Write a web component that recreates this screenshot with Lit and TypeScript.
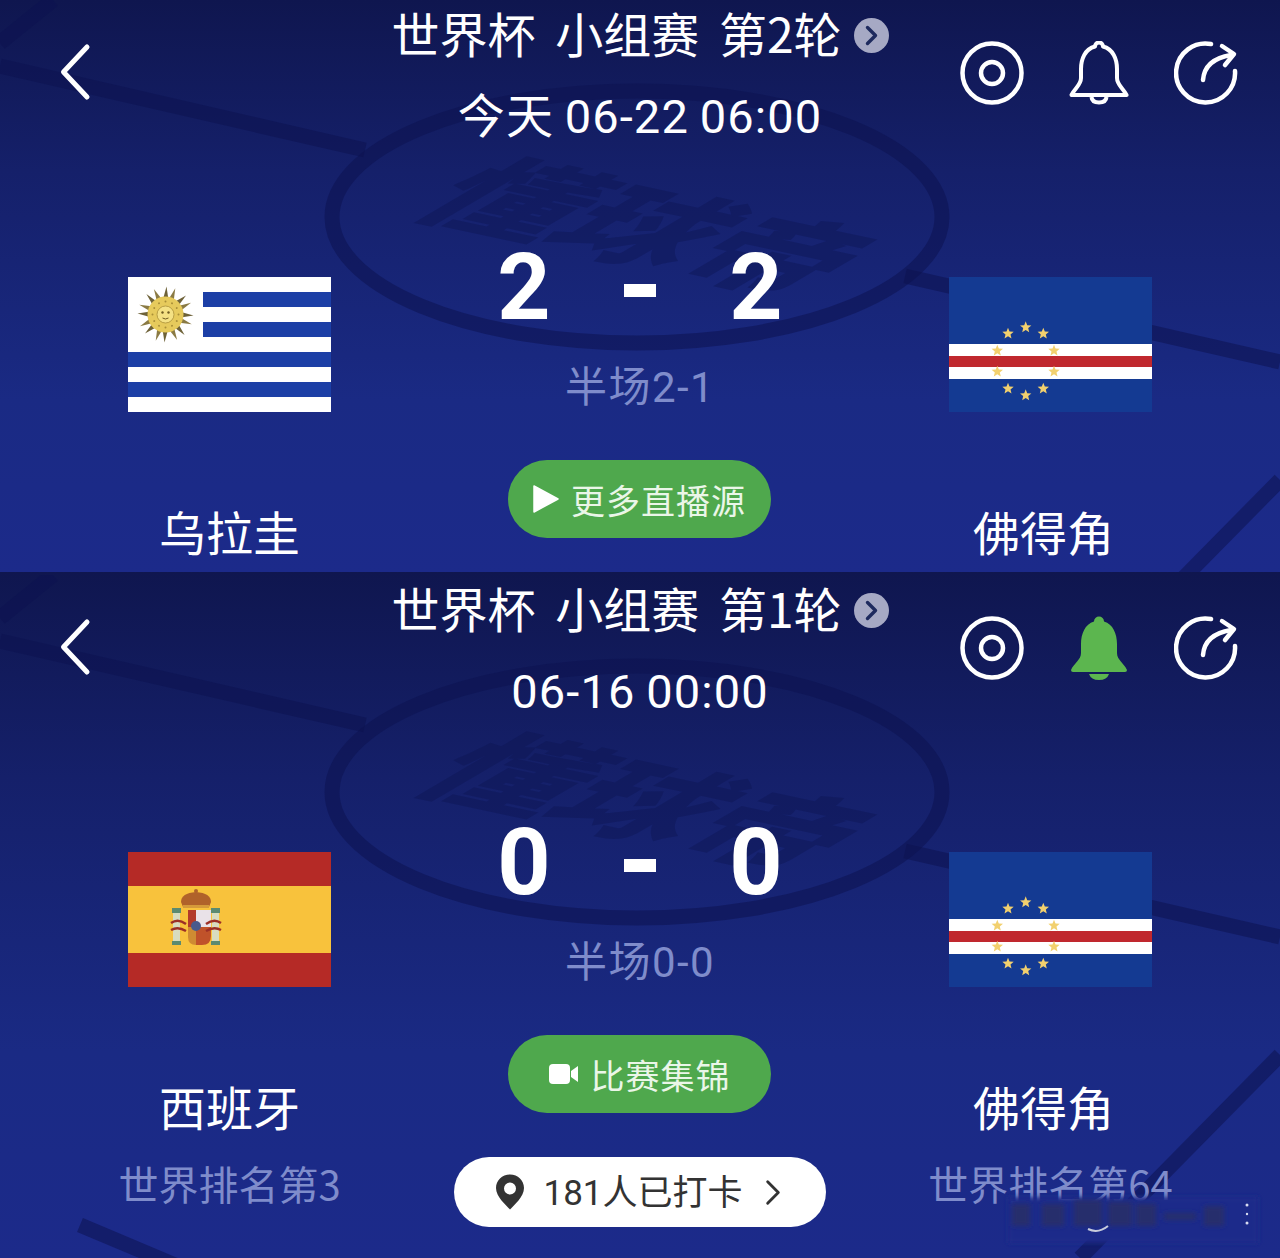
import { LitElement, html, css, svg } from "lit";
import { customElement, property } from "lit/decorators.js";

const star = (x: number, y: number) => {
  const pts: string[] = [];
  for (let i = 0; i < 10; i++) {
    const r = i % 2 ? 2.6 : 6;
    const a = -Math.PI / 2 + (i * Math.PI) / 5;
    pts.push(`${(x + r * Math.cos(a)).toFixed(1)},${(y + r * Math.sin(a)).toFixed(1)}`);
  }
  return svg`<polygon points=${pts.join(" ")} fill="#f2d06e"/>`;
};

const flagUruguay = html`<svg class="flag" viewBox="0 0 203 135">
  <rect width="203" height="135" fill="#fff"/>
  <g fill="#1c3fa6">
    <rect x="75" y="15" width="128" height="15"/>
    <rect x="75" y="45" width="128" height="15"/>
    <rect y="75" width="203" height="15"/>
    <rect y="105" width="203" height="15"/>
  </g>
  <g transform="translate(37.5 37.5)">
    ${Array.from({ length: 16 }, (_, i) => svg`<path d="M-3.4 -12 L${i % 2 ? -1 : 1} -28 L3.4 -12Z" fill=${i % 2 ? "#8a7a44" : "#6e6238"} transform="rotate(${i * 22.5})"/>`)}
    <circle r="18" fill="#e6ca5c"/>
    <circle r="8.5" fill="#f4e184" stroke="#a98f38" stroke-width=".8"/>
    <circle cx="-3" cy="-2" r="1.2" fill="#6e5a20"/>
    <circle cx="3" cy="-2" r="1.2" fill="#6e5a20"/>
    <path d="M-3 3.5 Q0 5.5 3 3.5" stroke="#6e5a20" fill="none" stroke-width="1"/>
    ${Array.from({ length: 12 }, (_, i) => svg`<circle cx="0" cy="-13" r="1" fill="#a98f38" transform="rotate(${i * 30})"/>`)}
  </g>
</svg>`;

const capeStars: [number, number][] = [
  [76.7, 50.3], [59, 56.7], [94.3, 56.7], [48.3, 73.7], [105, 73.7],
  [48.3, 94.7], [105, 94.7], [59, 111.7], [94.3, 111.7], [76.7, 118.3],
];
const flagCapeVerde = html`<svg class="flag" viewBox="0 0 203 135">
  <rect width="203" height="135" fill="#143a92"/>
  <rect y="67" width="203" height="35" fill="#fff"/>
  <rect y="79" width="203" height="11" fill="#c0282e"/>
  ${capeStars.map(([x, y]) => star(x, y))}
</svg>`;

const flagSpain = html`<svg class="flag" viewBox="0 0 203 135">
  <rect width="203" height="135" fill="#b52a26"/>
  <rect y="34" width="203" height="67" fill="#f8c23c"/>
  <g>
    <path d="M53 50 Q53 41 68 40 Q83 41 83 50 L81 55 H55Z" fill="#b0622a"/>
    <rect x="55" y="53" width="26" height="3" fill="#d59a3a"/>
    <circle cx="68" cy="39" r="2" fill="#b0622a"/>
    <rect x="60" y="58" width="16" height="17" fill="#b33a2a"/>
    <rect x="68" y="58" width="15" height="17" fill="#e9e2e8"/>
    <path d="M60 75 H68 V93 Q60 93 60 85Z" fill="#cf8b32"/>
    <path d="M68 75 H83 V84 Q83 93 74 93 H68Z" fill="#c0522a"/>
    <circle cx="68" cy="74" r="5" fill="#4a5a8c"/>
    <rect x="45" y="60" width="7" height="32" fill="#d8dcc0"/>
    <rect x="84" y="60" width="7" height="32" fill="#d8dcc0"/>
    <rect x="44" y="56" width="9" height="5" fill="#5c8a70"/>
    <rect x="83" y="56" width="9" height="5" fill="#5c8a70"/>
    <rect x="44" y="89" width="9" height="4" fill="#5c8a70"/>
    <rect x="83" y="89" width="9" height="4" fill="#5c8a70"/>
    <path d="M43 71 Q50 66 58 72 M43 78 Q50 74 58 79 M93 71 Q86 66 78 72 M93 78 Q86 74 78 79" stroke="#9c2f26" stroke-width="2.4" fill="none"/>
  </g>
</svg>`;

const backIcon = html`<svg class="back" viewBox="0 0 32 60"><path d="M27 4 L3.5 29 L27 54" fill="none" stroke="#fff" stroke-width="5" stroke-linecap="round" stroke-linejoin="round"/></svg>`;
const targetIcon = html`<svg class="icon" viewBox="0 0 64 64"><circle cx="32" cy="32" r="29.5" fill="none" stroke="#fff" stroke-width="4.5"/><circle cx="32" cy="32" r="11" fill="none" stroke="#fff" stroke-width="4.5"/></svg>`;
const bellOutline = html`<svg class="icon" viewBox="0 0 64 64"><path d="M28 5.5 a4 4 0 0 1 8 0 C46 8 50 18 50 28 V37 C50 44 56 47 59.5 54 H4.5 C8 47 14 44 14 37 V28 C14 18 18 8 28 5.5Z" fill="none" stroke="#fff" stroke-width="4" stroke-linejoin="round"/><path d="M24.5 56 Q25 61.5 32 61.5 Q39 61.5 39.5 56" fill="none" stroke="#fff" stroke-width="4"/></svg>`;
const bellFilled = html`<svg class="icon" viewBox="0 0 64 64"><path d="M27 5.5 a5 5 0 0 1 10 0 C46 8 50 18 50 28 V37 C50 44 57 47 60 54 Q60 56 58 56 H6 Q4 56 4 54 C7 47 14 44 14 37 V28 C14 18 18 8 27 5.5Z" fill="#5cb64f"/><path d="M22 58 H42 Q40 64 32 64 Q24 64 22 58Z" fill="#5cb64f"/></svg>`;
const shareIcon = html`<svg class="icon" viewBox="0 0 64 64"><path d="M37 3 A29.5 29.5 0 1 0 61 30" fill="none" stroke="#fff" stroke-width="4.5" stroke-linecap="round"/><path d="M29 39 C30 26 39 17 57 14" fill="none" stroke="#fff" stroke-width="4.5" stroke-linecap="round"/><path d="M48 5 L60 13 L51 24" fill="none" stroke="#fff" stroke-width="4.5" stroke-linecap="round" stroke-linejoin="round"/></svg>`;
const playIcon = html`<svg class="btn-icon" viewBox="0 0 26 30"><path d="M1 2 L25 15 L1 28Z" fill="#fff" stroke="#fff" stroke-width="1.5" stroke-linejoin="round"/></svg>`;
const videoIcon = html`<svg class="btn-icon" viewBox="0 0 30 22"><rect y="1" width="21" height="20" rx="4" fill="#fff"/><path d="M22 8 L29 3 V19 L22 14Z" fill="#fff"/></svg>`;
const pinIcon = html`<svg class="pin" viewBox="0 0 30 36"><path fill-rule="evenodd" d="M15 0.5 C7 0.5 1 6.5 1 14 C1 23 11 31 15 35.5 C19 31 29 23 29 14 C29 6.5 23 0.5 15 0.5Z M15 8.5 a6 6 0 1 1 0 12 a6 6 0 1 1 0 -12Z" fill="#333"/></svg>`;
const pillChevron = html`<svg class="pill-chevron" viewBox="0 0 18 30"><path d="M3 3 L15 15 L3 27" fill="none" stroke="#333" stroke-width="3.2" stroke-linecap="round" stroke-linejoin="round"/></svg>`;

interface Team { name: string; rank?: string; flag: unknown; }

@customElement("match-panel")
class MatchPanel extends LitElement {
  @property({ type: Object }) home!: Team;
  @property({ type: Object }) away!: Team;
  @property() round = "";
  @property() date = "";
  @property() scoreHome = "";
  @property() scoreAway = "";
  @property() half = "";
  @property() button = "";
  @property({ type: Boolean }) subscribed = false;
  @property() checkin = "";
  @property({ type: Boolean }) tall = false;

  static styles = css`
    :host { display: block; position: relative; overflow: hidden; font-family: "Noto Sans CJK SC", Roboto, sans-serif; color: #fff;
      background: linear-gradient(180deg, #0f164f 0%, #15206a 30%, #1a2a84 70%, #1c2a8a 100%); height: 572px; }
    :host([tall]) { height: 686px; padding-top: 3px; box-sizing: border-box; }
    .decor { position: absolute; left: 0; top: 0; width: 1280px; height: 700px; }
    :host([tall]) .decor { top: 3px; }
    .content { position: relative; }
    .head { display: grid; grid-template-columns: 320px 640px 320px; height: 164px; }
    .back-cell { padding: 43px 0 0 60px; }
    .back { display: block; width: 32px; height: 60px; }
    .center-head { text-align: center; }
    .title { display: flex; justify-content: center; align-items: center; height: 70px; font-size: 48px; line-height: 64px; gap: 12px; white-space: pre; word-spacing: 9px; }
    .title span { padding-bottom: 6px; }
    .badge { width: 35px; height: 35px; display: block; flex: none; }
    .date { height: 94px; line-height: 94px; font-family: Roboto, "Noto Sans CJK SC", sans-serif; font-size: 47px; letter-spacing: 1.1px; word-spacing: -2px; white-space: pre; }
    .actions { display: flex; justify-content: flex-end; gap: 43px; padding: 41px 42px 0 0; align-items: flex-start; }
    .icon { display: block; width: 64px; height: 64px; flex: none; }
    .body { display: grid; grid-template-columns: 459px 362px 459px; }
    .team { display: flex; flex-direction: column; align-items: center; padding-top: 113px; }
    .flag { display: block; width: 203px; height: 135px; }
    .name { font-size: 47px; line-height: 60px; margin-top: 89px; }
    .team.away .name { margin-right: 14px; }
    .rank { font-size: 40px; line-height: 50px; margin-top: 22px; color: #7f8ccb; white-space: nowrap; }
    .mid { display: flex; flex-direction: column; align-items: center; padding-top: 74px; }
    .score { display: grid; grid-template-columns: 116px 116px 116px; height: 100px; align-items: center; justify-items: center; font-family: Roboto, sans-serif; font-size: 93px; font-weight: 700; line-height: 100px; }
    .dash { width: 32px; height: 13px; background: #fff; margin-top: 4px; }
    .half { font-size: 42px; line-height: 50px; margin-top: 25px; color: #7f8ccb; font-family: Roboto, "Noto Sans CJK SC", sans-serif; white-space: pre; letter-spacing: 1.4px; }
    .btn { margin: 47px 1px 0 0; width: 263px; height: 78px; border-radius: 39px; background: #4fa84d; display: flex; align-items: center; justify-content: center; gap: 12px; font-size: 34px; color: #eaf6e8; letter-spacing: 1px; box-sizing: border-box; }
    .btn-icon { display: block; width: 26px; height: 30px; flex: none; }
    .btn.video .btn-icon { width: 30px; height: 22px; }
    .pill { margin-top: 44px; width: 372px; height: 70px; border-radius: 35px; background: #fff; color: #333; display: flex; align-items: center; justify-content: center; font-size: 35px; font-family: Roboto, "Noto Sans CJK SC", sans-serif; gap: 18px; white-space: nowrap; }
    .pill span { padding-bottom: 5px; }
    .pin { display: block; width: 30px; height: 36px; flex: none; }
    .pill-chevron { display: block; width: 16px; height: 27px; margin-left: 4px; margin-right: 4px; flex: none; }
    .smudge { position: absolute; left: 1000px; top: 620px; width: 270px; height: 60px; }
  `;

  render() {
    return html`
      <svg class="decor" viewBox="0 0 1280 700" fill="none" stroke="#0d1350" stroke-opacity=".55" stroke-width="15">
        <path d="M0 43 L53 0"/>
        <path d="M0 66 L365 150"/>
        <path d="M905 276 L1280 362"/>
        <path d="M1280 480 L1080 683"/>
        <path d="M80 650 L175 690"/>
        <ellipse cx="637" cy="217" rx="305" ry="126"/>
        <text x="0" y="0" transform="matrix(0.94 0.2 -0.85 0.5 405 212)" font-size="140" font-weight="900" font-family="Noto Sans CJK SC" fill="#0d1350" fill-opacity=".4" stroke="none">懂球帝</text>
      </svg>
      <div class="content">
        <div class="head">
          <div class="back-cell">${backIcon}</div>
          <div class="center-head">
            <div class="title"><span>世界杯 小组赛 ${this.round}</span><svg class="badge" viewBox="0 0 35 35"><circle cx="17.5" cy="17.5" r="17.5" fill="#a6a9c4"/><path d="M13.5 9.5 L21.5 17.5 L13.5 25.5" fill="none" stroke="#1e2a5e" stroke-width="3.4" stroke-linecap="round" stroke-linejoin="round"/></svg></div>
            <div class="date">${this.date}</div>
          </div>
          <div class="actions">${targetIcon}${this.subscribed ? bellFilled : bellOutline}${shareIcon}</div>
        </div>
        <div class="body">
          <div class="team">${this.home.flag}<div class="name">${this.home.name}</div>${this.home.rank ? html`<div class="rank">${this.home.rank}</div>` : ""}</div>
          <div class="mid">
            <div class="score"><span>${this.scoreHome}</span><div class="dash"></div><span>${this.scoreAway}</span></div>
            <div class="half">${this.half}</div>
            <div class="btn ${this.tall ? "video" : ""}">${this.tall ? videoIcon : playIcon}<span>${this.button}</span></div>
            ${this.checkin ? html`<div class="pill">${pinIcon}<span>${this.checkin}</span>${pillChevron}</div>` : ""}
          </div>
          <div class="team away">${this.away.flag}<div class="name">${this.away.name}</div>${this.away.rank ? html`<div class="rank">${this.away.rank}</div>` : ""}</div>
        </div>
      </div>
      ${this.tall
        ? html`<svg class="smudge" viewBox="0 0 270 60">
            <defs><filter id="b" x="-20%" y="-50%" width="140%" height="200%"><feGaussianBlur stdDeviation="2.6"/></filter><filter id="c" x="-20%" y="-50%" width="140%" height="200%"><feGaussianBlur stdDeviation="2.5"/></filter></defs>
            <rect x="8" y="5" width="250" height="46" fill="#1c2a8a" filter="url(#c)"/>
            <g filter="url(#b)" fill="#262f6c">
              <rect x="12" y="12" width="18" height="22"/><rect x="42" y="12" width="22" height="22"/><rect x="74" y="8" width="28" height="26"/>
              <rect x="108" y="10" width="24" height="24"/><rect x="136" y="12" width="20" height="22"/><rect x="164" y="21" width="32" height="7"/><rect x="204" y="14" width="20" height="20"/>
            </g>
            <path d="M88 37 Q98 42 108 34" stroke="#c8ccdc" stroke-width="2" fill="none"/>
            <circle cx="247" cy="13" r="1.5" fill="#d8dcf0"/><circle cx="247" cy="22" r="1.2" fill="#d8dcf0"/><circle cx="247" cy="31" r="1.5" fill="#d8dcf0"/>
          </svg>`
        : ""}
    `;
  }
}

@customElement("app-root")
export class AppRoot extends LitElement {
  static styles = css`:host { display: block; width: 1280px; }`;
  render() {
    return html`
      <match-panel round="第2轮" date="今天 06-22 06:00" scoreHome="2" scoreAway="2" half="半场2-1" button="更多直播源"
        .home=${{ name: "乌拉圭", flag: flagUruguay }} .away=${{ name: "佛得角", flag: flagCapeVerde }}></match-panel>
      <match-panel tall subscribed round="第1轮" date="06-16 00:00" scoreHome="0" scoreAway="0" half="半场0-0" button="比赛集锦" checkin="181人已打卡"
        .home=${{ name: "西班牙", rank: "世界排名第3", flag: flagSpain }} .away=${{ name: "佛得角", rank: "世界排名第64", flag: flagCapeVerde }}></match-panel>
    `;
  }
}
void MatchPanel;
